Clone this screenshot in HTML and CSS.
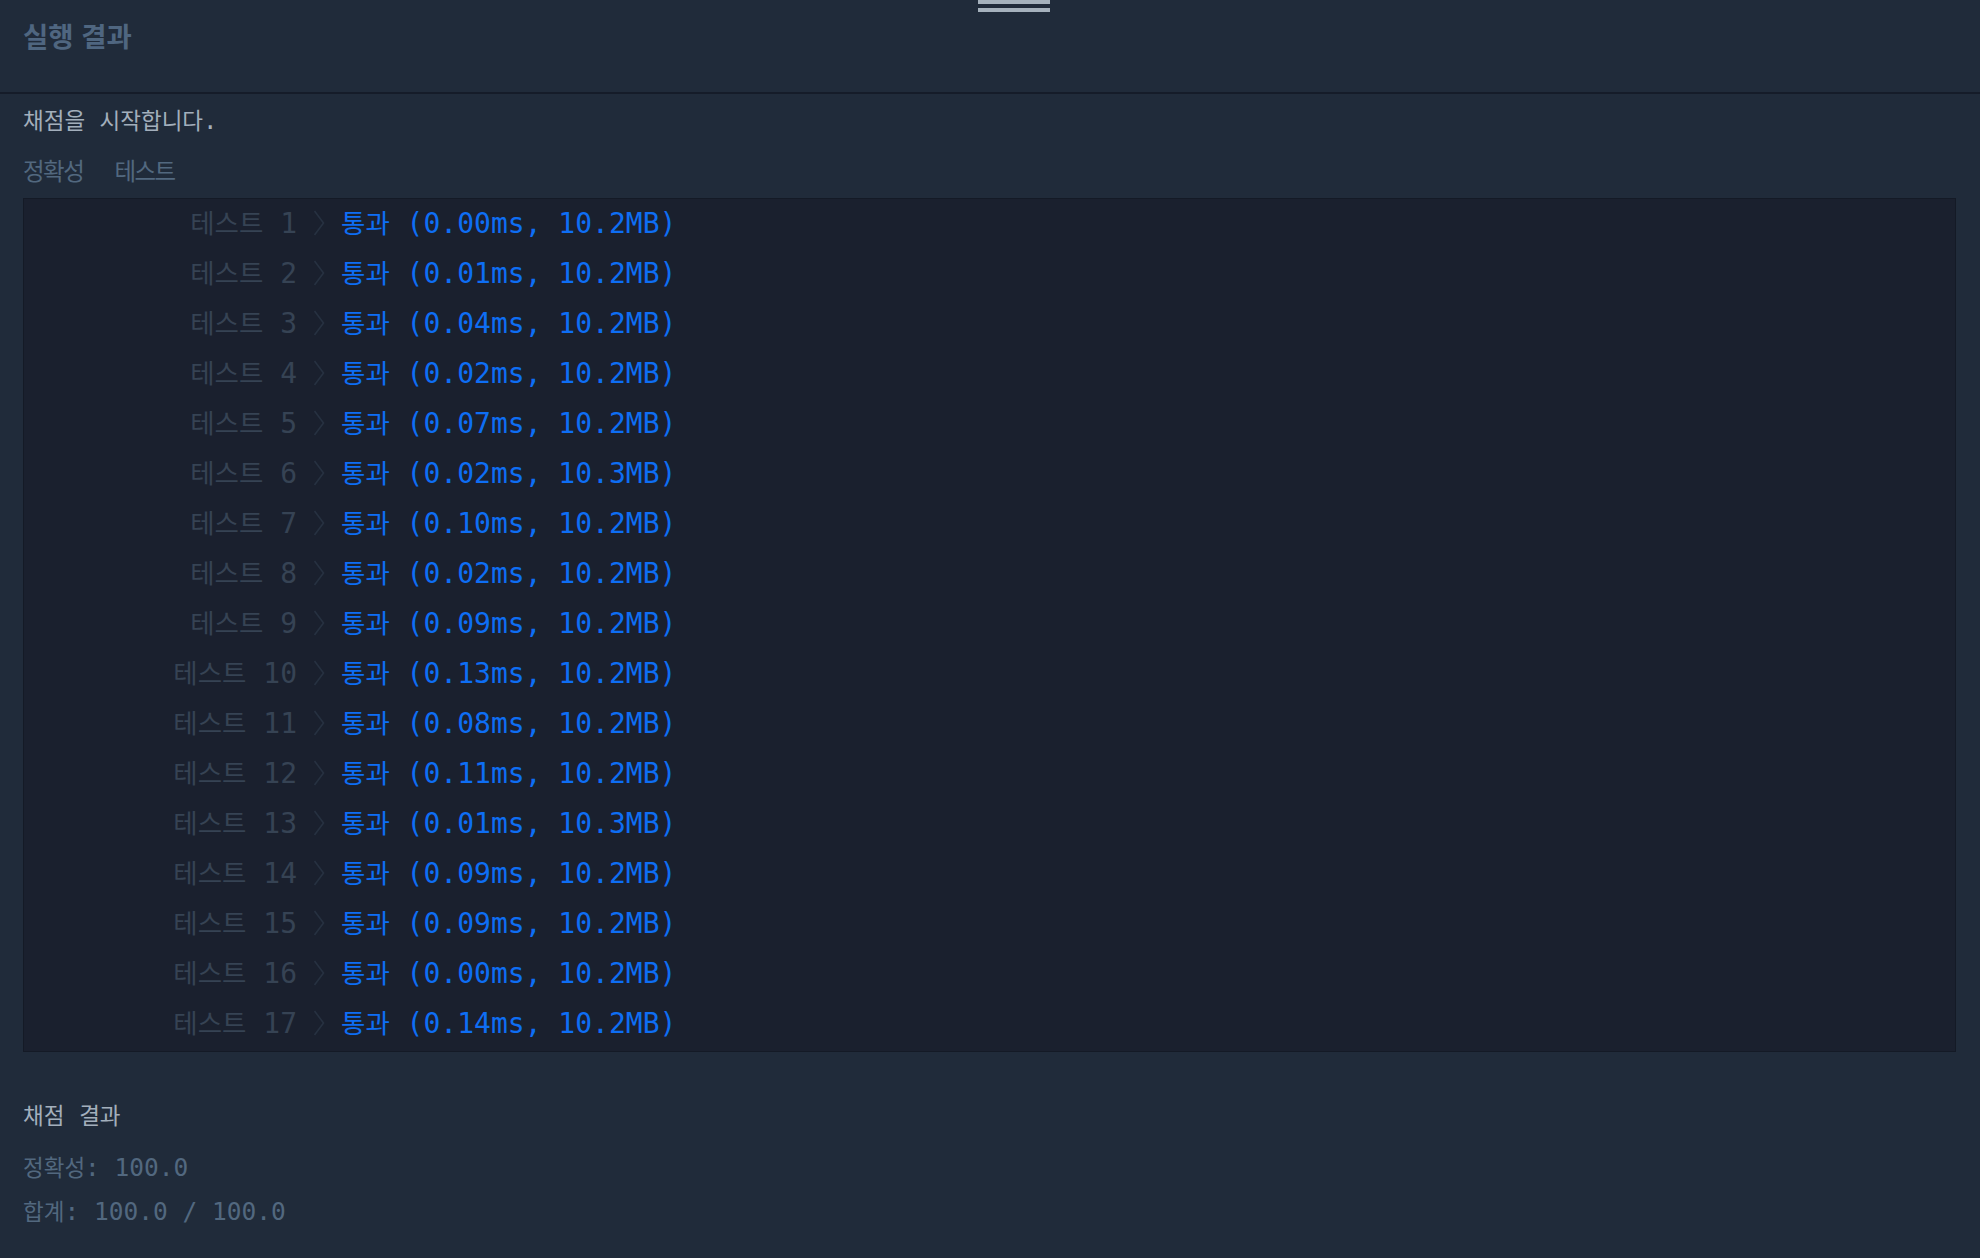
FILE: index.html
```html
<!DOCTYPE html>
<html lang="ko">
<head>
<meta charset="utf-8">
<title>실행 결과</title>
<link rel="stylesheet" href="styles.css">
</head>
<body>
<div class="handle"><span></span><span></span></div>
<header class="head">
  <h1 class="title">실행 결과</h1>
</header>
<main class="content">
  <p class="start mono"><span class="k">채점을</span> <span class="k">시작합니다</span>.</p>
  <div class="tabs">
    <span class="tab">정확성</span>
    <span class="tab">테스트</span>
  </div>
  <div class="box mono">
    <div class="row"><span class="label"><span class="k">테스트</span> 1</span><svg class="chev" viewBox="0 0 12 26"><polyline points="1.5,1 10.5,13 1.5,25"/></svg><span class="res"><span class="k">통과</span> (0.00ms, 10.2MB)</span></div>
    <div class="row"><span class="label"><span class="k">테스트</span> 2</span><svg class="chev" viewBox="0 0 12 26"><polyline points="1.5,1 10.5,13 1.5,25"/></svg><span class="res"><span class="k">통과</span> (0.01ms, 10.2MB)</span></div>
    <div class="row"><span class="label"><span class="k">테스트</span> 3</span><svg class="chev" viewBox="0 0 12 26"><polyline points="1.5,1 10.5,13 1.5,25"/></svg><span class="res"><span class="k">통과</span> (0.04ms, 10.2MB)</span></div>
    <div class="row"><span class="label"><span class="k">테스트</span> 4</span><svg class="chev" viewBox="0 0 12 26"><polyline points="1.5,1 10.5,13 1.5,25"/></svg><span class="res"><span class="k">통과</span> (0.02ms, 10.2MB)</span></div>
    <div class="row"><span class="label"><span class="k">테스트</span> 5</span><svg class="chev" viewBox="0 0 12 26"><polyline points="1.5,1 10.5,13 1.5,25"/></svg><span class="res"><span class="k">통과</span> (0.07ms, 10.2MB)</span></div>
    <div class="row"><span class="label"><span class="k">테스트</span> 6</span><svg class="chev" viewBox="0 0 12 26"><polyline points="1.5,1 10.5,13 1.5,25"/></svg><span class="res"><span class="k">통과</span> (0.02ms, 10.3MB)</span></div>
    <div class="row"><span class="label"><span class="k">테스트</span> 7</span><svg class="chev" viewBox="0 0 12 26"><polyline points="1.5,1 10.5,13 1.5,25"/></svg><span class="res"><span class="k">통과</span> (0.10ms, 10.2MB)</span></div>
    <div class="row"><span class="label"><span class="k">테스트</span> 8</span><svg class="chev" viewBox="0 0 12 26"><polyline points="1.5,1 10.5,13 1.5,25"/></svg><span class="res"><span class="k">통과</span> (0.02ms, 10.2MB)</span></div>
    <div class="row"><span class="label"><span class="k">테스트</span> 9</span><svg class="chev" viewBox="0 0 12 26"><polyline points="1.5,1 10.5,13 1.5,25"/></svg><span class="res"><span class="k">통과</span> (0.09ms, 10.2MB)</span></div>
    <div class="row"><span class="label"><span class="k">테스트</span> 10</span><svg class="chev" viewBox="0 0 12 26"><polyline points="1.5,1 10.5,13 1.5,25"/></svg><span class="res"><span class="k">통과</span> (0.13ms, 10.2MB)</span></div>
    <div class="row"><span class="label"><span class="k">테스트</span> 11</span><svg class="chev" viewBox="0 0 12 26"><polyline points="1.5,1 10.5,13 1.5,25"/></svg><span class="res"><span class="k">통과</span> (0.08ms, 10.2MB)</span></div>
    <div class="row"><span class="label"><span class="k">테스트</span> 12</span><svg class="chev" viewBox="0 0 12 26"><polyline points="1.5,1 10.5,13 1.5,25"/></svg><span class="res"><span class="k">통과</span> (0.11ms, 10.2MB)</span></div>
    <div class="row"><span class="label"><span class="k">테스트</span> 13</span><svg class="chev" viewBox="0 0 12 26"><polyline points="1.5,1 10.5,13 1.5,25"/></svg><span class="res"><span class="k">통과</span> (0.01ms, 10.3MB)</span></div>
    <div class="row"><span class="label"><span class="k">테스트</span> 14</span><svg class="chev" viewBox="0 0 12 26"><polyline points="1.5,1 10.5,13 1.5,25"/></svg><span class="res"><span class="k">통과</span> (0.09ms, 10.2MB)</span></div>
    <div class="row"><span class="label"><span class="k">테스트</span> 15</span><svg class="chev" viewBox="0 0 12 26"><polyline points="1.5,1 10.5,13 1.5,25"/></svg><span class="res"><span class="k">통과</span> (0.09ms, 10.2MB)</span></div>
    <div class="row"><span class="label"><span class="k">테스트</span> 16</span><svg class="chev" viewBox="0 0 12 26"><polyline points="1.5,1 10.5,13 1.5,25"/></svg><span class="res"><span class="k">통과</span> (0.00ms, 10.2MB)</span></div>
    <div class="row"><span class="label"><span class="k">테스트</span> 17</span><svg class="chev" viewBox="0 0 12 26"><polyline points="1.5,1 10.5,13 1.5,25"/></svg><span class="res"><span class="k">통과</span> (0.14ms, 10.2MB)</span></div>
  </div>
  <section class="summary mono">
    <p class="sum-title"><span class="k">채점</span> <span class="k">결과</span></p>
    <p class="sum-line"><span class="k">정확성</span>: 100.0</p>
    <p class="sum-line"><span class="k">합계</span>: 100.0 / 100.0</p>
  </section>
</main>
</body>
</html>
```

FILE: styles.css
```css
* { box-sizing: border-box; }

html, body {
  margin: 0;
  padding: 0;
  background: #202b3a;
  height: 100%;
}

body {
  font-family: "Noto Sans CJK KR", "Noto Sans", sans-serif;
  position: relative;
  overflow: hidden;
}

.handle {
  position: absolute;
  top: 0;
  left: 978px;
  width: 72px;
  display: flex;
  flex-direction: column;
  gap: 4px;
}
.handle span {
  display: block;
  height: 4px;
  background: #a5b1bc;
}

.head {
  height: 94px;
  padding: 17px 23px 0;
  border-bottom: 2px solid #151c29;
}

.title {
  margin: 0;
  font-size: 27.5px;
  line-height: 36px;
  font-weight: 700;
  color: #4f6680;
}

.content {
  padding: 0 24px 0 23px;
}

.mono {
  font-family: "DejaVu Sans Mono", "Noto Sans CJK KR", monospace;
}

.start {
  margin: 7px 0 0;
  font-size: 24px;
  line-height: 36px;
  color: #a3afbc;
  white-space: pre;
}
.start .k,
.summary .k {
  font-family: "Noto Sans CJK KR", sans-serif;
  font-size: 22.5px;
}

.tabs {
  margin-top: 13px;
  display: flex;
  gap: 31px;
  height: 36px;
  align-items: center;
}
.tab {
  font-size: 23.5px;
  letter-spacing: -1.5px;
  color: #52687f;
  line-height: 36px;
}

.box {
  margin-top: 10px;
  background: #1a202e;
  border: 1px solid #141a26;
  padding: 0 0 2px;
}

.row {
  display: flex;
  align-items: center;
  height: 50px;
  padding-bottom: 2px;
  font-size: 28px;
  line-height: 48px;
  white-space: pre;
}
.row .k {
  font-family: "Noto Sans CJK KR", sans-serif;
  font-size: 26.5px;
}

.label {
  width: 273px;
  text-align: right;
  color: #364354;
}

.chev {
  width: 12px;
  height: 26px;
  margin: 0 16px;
  flex: none;
}
.chev polyline {
  fill: none;
  stroke: #273141;
  stroke-width: 1.6;
}

.res {
  color: #0e6ef4;
}

.summary {
  margin-top: 44px;
  font-size: 24.5px;
}
.summary p {
  margin: 0;
  white-space: pre;
}
.sum-title {
  line-height: 36px;
  color: #a3afbc;
}
.sum-line {
  line-height: 43px;
  color: #52687f;
}
.sum-title + .sum-line {
  margin-top: 11px;
}
```
